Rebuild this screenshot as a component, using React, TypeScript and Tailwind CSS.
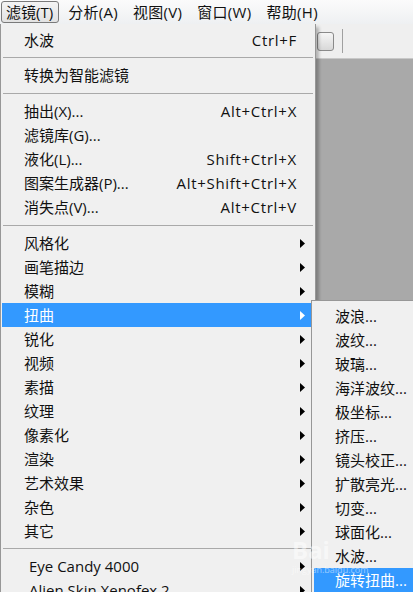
import React from 'react';

type Item =
  | { sep: true; h: number }
  | { sep?: false; label: string; shortcut?: string; arrow?: boolean; active?: boolean; indent?: boolean };

const mainItems: Item[] = [
  { label: '水波', shortcut: 'Ctrl+F' },
  { sep: true, h: 11 },
  { label: '转换为智能滤镜' },
  { sep: true, h: 12 },
  { label: '抽出(X)...', shortcut: 'Alt+Ctrl+X' },
  { label: '滤镜库(G)...' },
  { label: '液化(L)...', shortcut: 'Shift+Ctrl+X' },
  { label: '图案生成器(P)...', shortcut: 'Alt+Shift+Ctrl+X' },
  { label: '消失点(V)...', shortcut: 'Alt+Ctrl+V' },
  { sep: true, h: 12 },
  { label: '风格化', arrow: true },
  { label: '画笔描边', arrow: true },
  { label: '模糊', arrow: true },
  { label: '扭曲', arrow: true, active: true },
  { label: '锐化', arrow: true },
  { label: '视频', arrow: true },
  { label: '素描', arrow: true },
  { label: '纹理', arrow: true },
  { label: '像素化', arrow: true },
  { label: '渲染', arrow: true },
  { label: '艺术效果', arrow: true },
  { label: '杂色', arrow: true },
  { label: '其它', arrow: true },
  { sep: true, h: 11 },
  { label: 'Eye Candy 4000', arrow: true, indent: true },
  { label: 'Alien Skin Xenofex 2', arrow: true, indent: true },
];

const subItems = [
  '波浪...',
  '波纹...',
  '玻璃...',
  '海洋波纹...',
  '极坐标...',
  '挤压...',
  '镜头校正...',
  '扩散亮光...',
  '切变...',
  '球面化...',
  '水波...',
  '旋转扭曲...',
];

const menuBar = ['分析(A)', '视图(V)', '窗口(W)', '帮助(H)'];

const Arrow = ({ white }: { white?: boolean }) => (
  <svg width="5" height="9" viewBox="0 0 5 9">
    <path d="M0 0 L5 4.5 L0 9 Z" fill={white ? '#ffffff' : '#000000'} />
  </svg>
);

const MenuRow = ({ item }: { item: Item }) => {
  if (item.sep) {
    return (
      <div className={`flex items-center px-[2px] ${item.h === 12 ? 'h-[12px]' : 'h-[11px]'}`}>
        <div className="h-px w-full bg-[#a9a9a9]" />
      </div>
    );
  }
  return (
    <div
      className={`mx-px flex h-[24px] items-center ${
        item.active ? 'bg-[#3399ff] text-white' : 'text-[#111111]'
      }`}
    >
      <span className={`flex-1 whitespace-nowrap ${item.indent ? 'pl-[27px]' : 'pl-[22px]'}`}>{item.label}</span>
      {item.shortcut && <span className="mr-[-1px] whitespace-nowrap tracking-[0.7px]">{item.shortcut}</span>}
      <span className="flex w-[18px] items-center pl-[4px]">{item.arrow && <Arrow white={item.active} />}</span>
    </div>
  );
};

export default function App() {
  return (
    <div className="relative h-[592px] w-[413px] overflow-hidden bg-[#a9a9a9] font-['Open_Sans','Noto_Sans_CJK_SC',sans-serif] text-[15px] leading-none">
      {/* menu bar */}
      <div className="flex h-[24px] items-center bg-gradient-to-b from-[#fbfbfb] to-[#eef0f2] text-[#111111]">
        <div className="ml-px flex h-[22px] items-center rounded-[3px] border border-[#7a7a7a] bg-gradient-to-b from-[#f4f4f4] to-[#e2e2e2] pl-[4px] pr-[5px]">
          滤镜(T)
        </div>
        {menuBar.map((m, i) => (
          <div key={m} className={`whitespace-nowrap tracking-[0.3px] ${i === 0 ? 'ml-[9px]' : 'ml-[15px]'}`}>
            {m}
          </div>
        ))}
      </div>

      {/* toolbar behind */}
      <div className="flex h-[35px] items-center border-b border-[#c8c8c8] bg-[#efefef] pl-[317px]">
        <div className="h-[19px] w-[17px] rounded-[3px] border border-[#8a8a8a] bg-gradient-to-b from-[#f6f6f6] to-[#d8d8d8]" />
        <div className="ml-[8px] h-[24px] w-px bg-[#a0a0a0]" />
      </div>

      {/* main menu */}
      <div className="absolute left-0 top-[24px] w-[316px] border border-t-0 border-[#979797] bg-[#f0f0f0] pt-[4px] shadow-[3px_3px_3px_rgba(0,0,0,0.25)]">
        {mainItems.map((item, i) => (
          <MenuRow key={i} item={item} />
        ))}
      </div>

      {/* submenu */}
      <div className="absolute left-[311px] top-[300px] w-[120px] border border-[#979797] bg-[#f0f0f0] pt-[3px]">
        {subItems.map((s, i) => {
          const active = i === subItems.length - 1;
          return (
            <div
              key={s}
              className={`ml-[2px] flex h-[24px] items-center whitespace-nowrap pl-[21px] ${
                active ? 'bg-[#3399ff] text-white' : 'text-[#111111]'
              }`}
            >
              {s}
            </div>
          );
        })}
      </div>

      {/* watermark */}
      <div className="pointer-events-none absolute left-[292px] top-[538px] flex flex-col text-white/50">
        <span className="text-[24px] font-bold leading-none">Bai</span>
        <span className="mt-[3px] text-[9px] leading-none">jingyan.baidu.com</span>
      </div>
    </div>
  );
}
